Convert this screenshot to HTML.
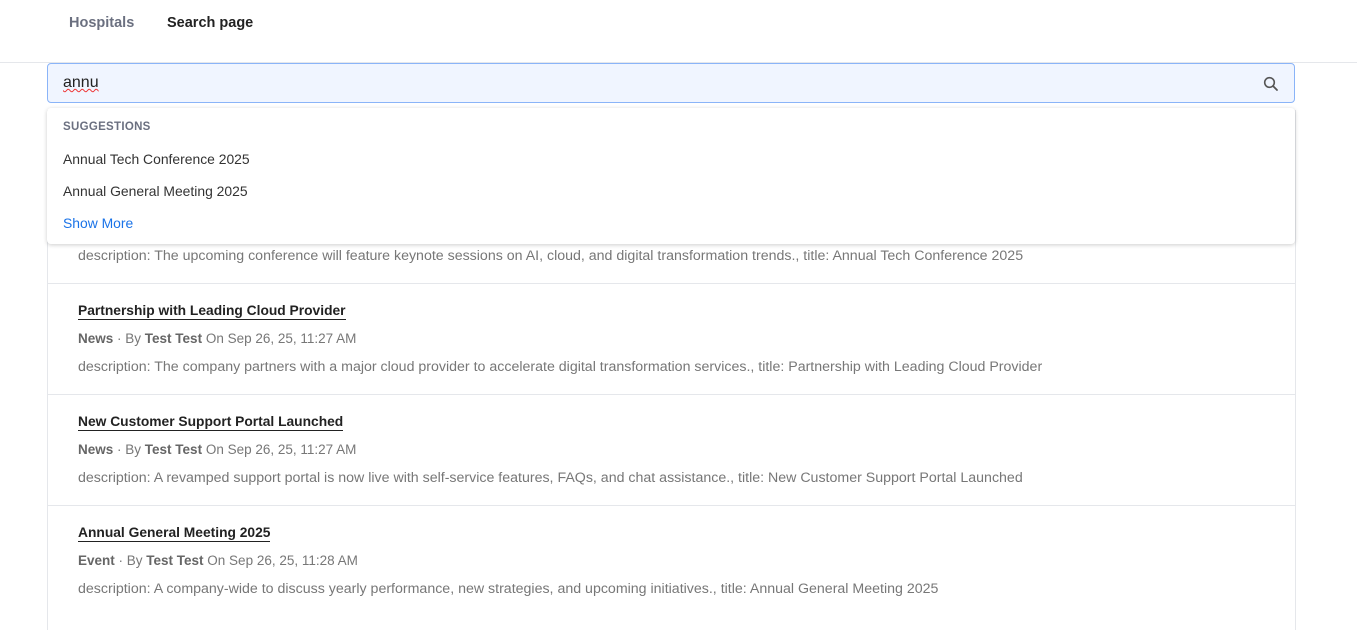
<!DOCTYPE html><html><head><style>
body{margin:0;background:#fff;font-family:"Liberation Sans",sans-serif;width:1357px;height:615px;overflow:hidden;position:relative}
.nav{position:absolute;top:0;left:0;right:0;height:62px;border-bottom:1px solid #e5e7eb}
.nav span{position:absolute;top:15px;font-size:14.5px;font-weight:bold}
.inp{position:absolute;left:47px;top:63px;width:1246px;height:38px;border:1px solid #8ab4f8;border-radius:4px;background:#f0f5ff}
.inp .t{position:absolute;left:15px;top:10px;font-size:16px;color:#222;text-decoration:underline wavy #e33;text-decoration-thickness:1px}
.list{position:absolute;left:47px;top:110px;width:1247px;height:520px;border-left:1px solid #e5e7eb;border-right:1px solid #e5e7eb}
.item{position:absolute;left:0;right:0;height:110px;border-bottom:1px solid #e5e7eb}
.item .h{position:absolute;left:30px;top:18px;font-size:13.8px;font-weight:bold;color:#222;border-bottom:1.5px solid #222;line-height:17px}
.item .m{position:absolute;left:30px;top:47px;font-size:13.5px;color:#777}
.item .m b{color:#666}
.item .d{position:absolute;left:30px;top:75px;font-size:14.2px;color:#777}
.dd{position:absolute;left:47px;top:108px;width:1248px;height:136px;background:#fff;border-radius:4px;box-shadow:0 1px 4px rgba(0,0,0,.2)}
.dd div{position:absolute;left:16px;font-size:13.9px;color:#333}
</style></head><body>
<div class="nav"><span style="left:69px;color:#6b7080">Hospitals</span><span style="left:167px;color:#222">Search page</span></div>
<div class="list">
<div class="item" style="top:63px;height:110px"><div class="d">description: The upcoming conference will feature keynote sessions on AI, cloud, and digital transformation trends., title: Annual Tech Conference 2025</div></div>
<div class="item" style="top:174px"><div class="h">Partnership with Leading Cloud Provider</div><div class="m"><b>News</b> · By <b>Test Test</b> On Sep 26, 25, 11:27 AM</div><div class="d">description: The company partners with a major cloud provider to accelerate digital transformation services., title: Partnership with Leading Cloud Provider</div></div>
<div class="item" style="top:285px"><div class="h">New Customer Support Portal Launched</div><div class="m"><b>News</b> · By <b>Test Test</b> On Sep 26, 25, 11:27 AM</div><div class="d">description: A revamped support portal is now live with self-service features, FAQs, and chat assistance., title: New Customer Support Portal Launched</div></div>
<div class="item" style="top:396px;border-bottom:none"><div class="h">Annual General Meeting 2025</div><div class="m"><b>Event</b> · By <b>Test Test</b> On Sep 26, 25, 11:28 AM</div><div class="d">description: A company-wide to discuss yearly performance, new strategies, and upcoming initiatives., title: Annual General Meeting 2025</div></div>
</div>
<div class="inp"><span class="t">annu</span>
<svg style="position:absolute;right:15px;top:12px" width="16" height="16" viewBox="0 0 16 16"><circle cx="6.5" cy="6.5" r="4.8" fill="none" stroke="#555" stroke-width="1.6"/><path d="M10 10l4 4" stroke="#555" stroke-width="1.8" stroke-linecap="round"/></svg></div>
<div class="dd">
<div style="top:13px;font-size:11.5px;font-weight:bold;color:#6b7080;letter-spacing:.3px">SUGGESTIONS</div>
<div style="top:43px">Annual Tech Conference 2025</div>
<div style="top:75px">Annual General Meeting 2025</div>
<div style="top:107px;color:#1a73e8">Show More</div>
</div>
</body></html>
